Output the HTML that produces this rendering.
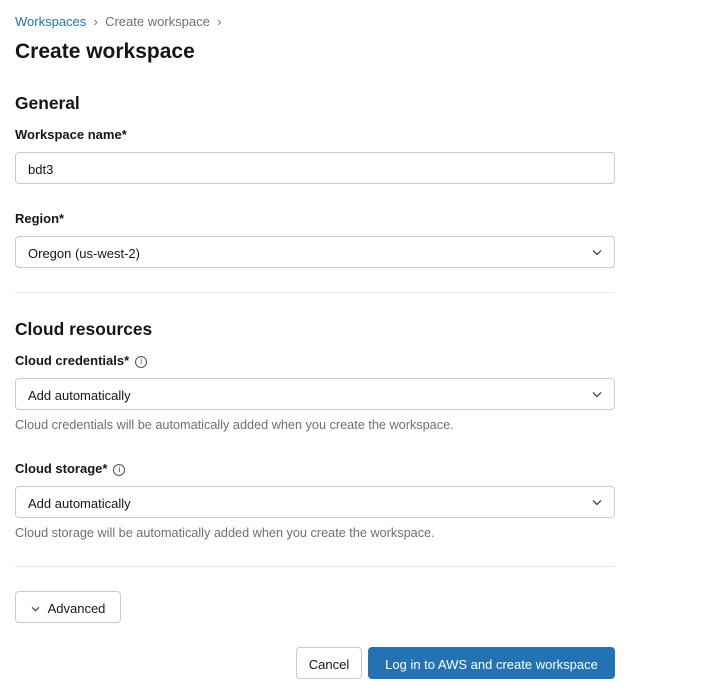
<!DOCTYPE html>
<html><head><style>
body{margin:0;width:705px;height:694px;background:#fff;font-family:"Liberation Sans",sans-serif;color:#161616;position:relative;overflow:hidden}
.a{position:absolute;white-space:nowrap}
.lbl{font-size:13px;font-weight:bold}
.box{position:absolute;left:15px;width:600px;height:32px;border:1px solid #cbcbcb;border-radius:4px;font-size:13px;line-height:31px;box-sizing:border-box}
.box span{position:absolute;left:12px;top:1px}
.chev{position:absolute;right:12px;top:12px}
.help{font-size:12.7px;color:#6f6f6f}
.hr{position:absolute;left:15px;width:600px;height:1px;background:#e8e8e8}
.btn{position:absolute;height:32px;border:1px solid #cbcbcb;border-radius:4px;font-size:13px;line-height:31px;text-align:center;box-sizing:border-box;padding-top:1px}
.info{display:inline-block;width:10px;height:10px;border:1px solid #555;border-radius:50%;font-size:8px;line-height:10px;text-align:center;font-weight:normal;vertical-align:1px;margin-left:6px;color:#444}
</style></head><body>
<div class="a" style="left:15px;top:14px;font-size:13px"><span style="color:#2272b4">Workspaces</span><span style="color:#6f6f6f">&nbsp; › &nbsp;Create workspace &nbsp;›</span></div>
<div class="a" style="left:15px;top:40px;font-size:21px;font-weight:bold">Create workspace</div>
<div class="a" style="left:15px;top:93px;font-size:17.4px;font-weight:bold">General</div>
<div class="a lbl" style="left:15px;top:127px">Workspace name*</div>
<div class="box" style="top:152px"><span>bdt3</span></div>
<div class="a lbl" style="left:15px;top:211px">Region*</div>
<div class="box" style="top:236px"><span>Oregon (us-west-2)</span><svg class="chev" width="10" height="7" viewBox="0 0 10 7"><path d="M1 1.5l4 4 4-4" fill="none" stroke="#444" stroke-width="1.3"/></svg></div>
<div class="hr" style="top:292px"></div>
<div class="a" style="left:15px;top:319px;font-size:17.4px;font-weight:bold">Cloud resources</div>
<div class="a lbl" style="left:15px;top:353px">Cloud credentials*<span class="info">i</span></div>
<div class="box" style="top:378px"><span>Add automatically</span><svg class="chev" width="10" height="7" viewBox="0 0 10 7"><path d="M1 1.5l4 4 4-4" fill="none" stroke="#444" stroke-width="1.3"/></svg></div>
<div class="a help" style="left:15px;top:418px">Cloud credentials will be automatically added when you create the workspace.</div>
<div class="a lbl" style="left:15px;top:461px">Cloud storage*<span class="info">i</span></div>
<div class="box" style="top:486px"><span>Add automatically</span><svg class="chev" width="10" height="7" viewBox="0 0 10 7"><path d="M1 1.5l4 4 4-4" fill="none" stroke="#444" stroke-width="1.3"/></svg></div>
<div class="a help" style="left:15px;top:526px">Cloud storage will be automatically added when you create the workspace.</div>
<div class="hr" style="top:566px"></div>
<div class="btn" style="left:15px;top:591px;width:106px"><svg width="9" height="6" viewBox="0 0 10 7" style="margin-right:8px;vertical-align:1px"><path d="M1 1.5l4 4 4-4" fill="none" stroke="#444" stroke-width="1.4"/></svg>Advanced</div>
<div class="btn" style="left:296px;top:647px;width:66px">Cancel</div>
<div class="btn" style="left:368px;top:647px;width:247px;background:#2272b4;border-color:#2272b4;color:#fff">Log in to AWS and create workspace</div>
</body></html>
